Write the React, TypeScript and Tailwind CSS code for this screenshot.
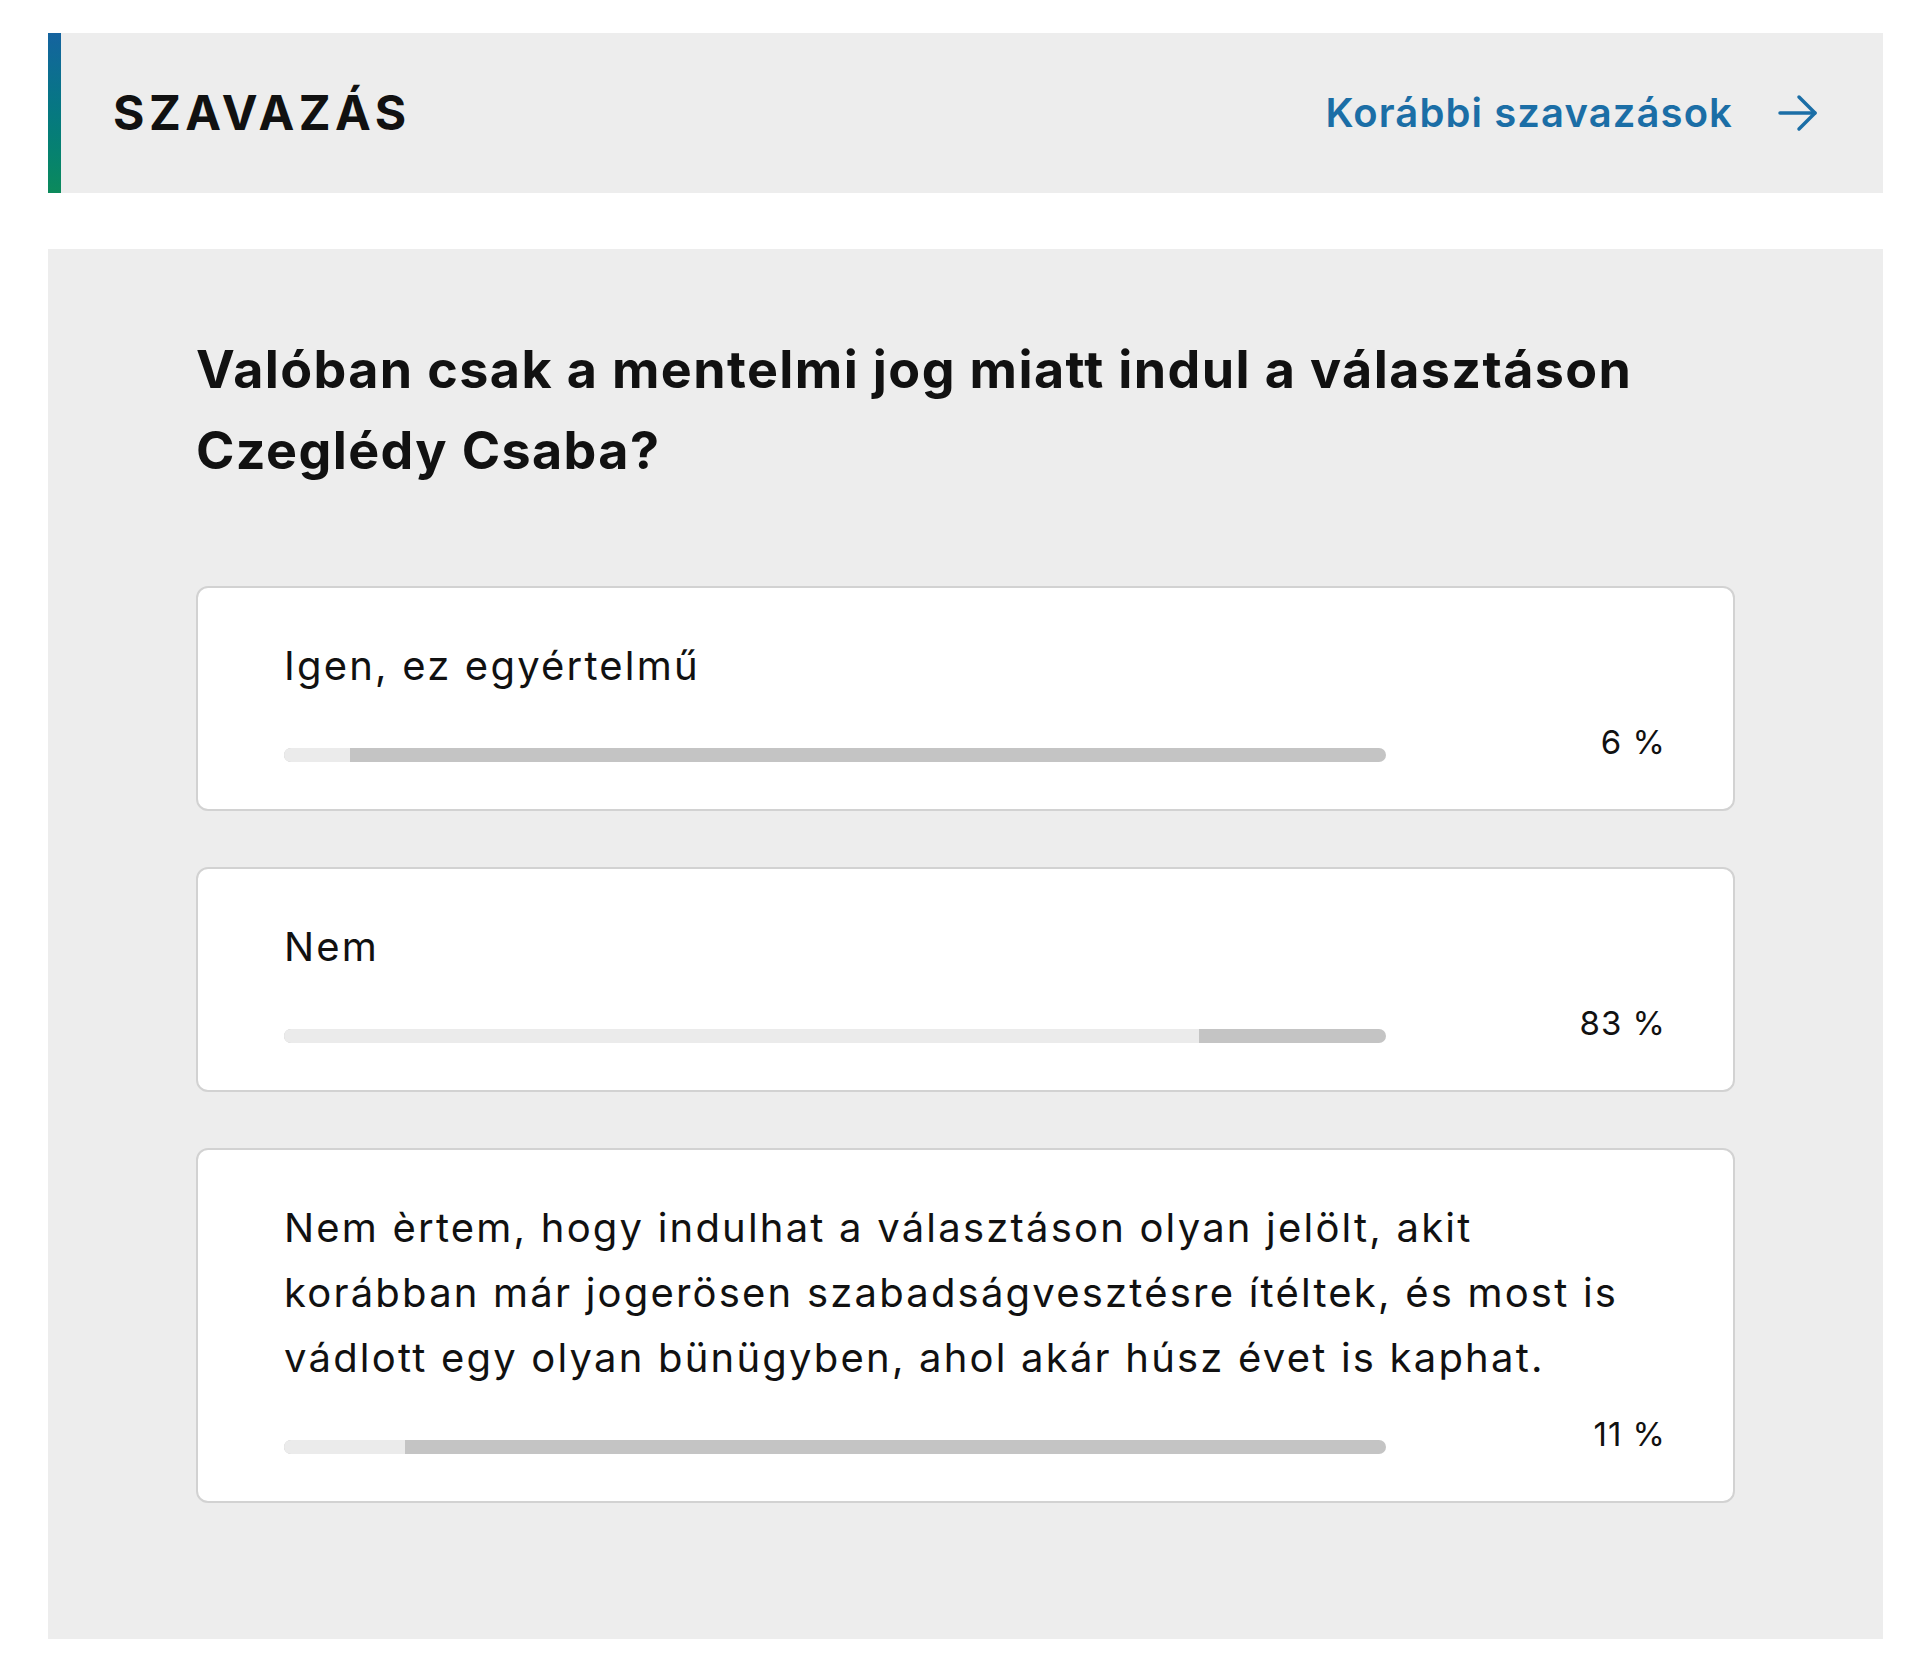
const options = [
  { label: "Igen, ez egyértelmű", percent: 6 },
  { label: "Nem", percent: 83 },
  {
    label:
      "Nem èrtem, hogy indulhat a választáson olyan jelölt, akit korábban már jogerösen szabadságvesztésre ítéltek, és most is vádlott egy olyan bünügyben, ahol akár húsz évet is kaphat.",
    percent: 11,
  },
];

function ArrowIcon() {
  return (
    <svg width="42" height="38" viewBox="0 0 42 38" fill="none" stroke="currentColor" strokeWidth="3.5" strokeLinecap="round" strokeLinejoin="round">
      <path d="M3 19h35" />
      <path d="M22 3l16 16-16 16" />
    </svg>
  );
}

function PollOption({ label, percent }: { label: string; percent: number }) {
  return (
    <div className="bg-white border-2 border-[#d2d2d2] rounded-[12px] pt-[45px] pb-[47px] pl-[86px] pr-[67px]">
      <p className="text-[40px] leading-[65px] font-normal tracking-[2.2px] text-[#111]">{label}</p>
      <div className="flex items-center h-[14px] mt-[50px]">
        <div className="w-[1102px] h-[14px] rounded-full bg-[#c4c4c4] overflow-hidden">
          <div className="h-full bg-[#ebebeb]" style={{ width: `${percent}%` }} />
        </div>
        <div className="flex-1 text-right text-[33px] leading-[36px] tracking-[1px] text-[#111] mb-[26px]">
          {percent} %
        </div>
      </div>
    </div>
  );
}

export default function App() {
  return (
    <div className="min-h-screen bg-white pt-[33px] pb-[42px] pl-[48px] pr-[37px]" style={{ fontFamily: "Inter, 'Noto Sans', sans-serif" }}>
      <div className="flex h-[160px] bg-[#ededed]">
        <div className="w-[13px] bg-linear-to-b from-[#15639f] to-[#0c8a5b]" />
        <div className="flex flex-1 items-center justify-between pl-[52px] pr-[64px]">
          <h2 className="text-[48px] font-bold tracking-[4.5px] text-[#111]">SZAVAZÁS</h2>
          <a href="#" className="flex items-center gap-[44px] text-[40px] font-semibold tracking-[1.1px] text-[#1b6ea6]">
            <span>Korábbi szavazások</span>
            <ArrowIcon />
          </a>
        </div>
      </div>

      <div className="mt-[56px] bg-[#ededed] pt-[80px] pb-[136px] px-[148px]">
        <h3 className="text-[52px] leading-[81px] font-bold tracking-[1.4px] text-[#111]">
          Valóban csak a mentelmi jog miatt indul a választáson Czeglédy Csaba?
        </h3>
        <div className="mt-[95px] flex flex-col gap-[56px]">
          {options.map((o) => (
            <PollOption key={o.percent} label={o.label} percent={o.percent} />
          ))}
        </div>
      </div>
    </div>
  );
}
